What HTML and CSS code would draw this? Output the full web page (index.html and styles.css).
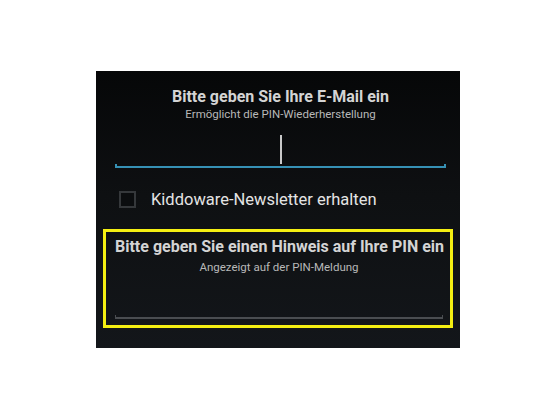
FILE: index.html
```html
<!DOCTYPE html>
<html lang="de">
<head>
<meta charset="utf-8">
<title>PIN-Einstellungen</title>
<link rel="stylesheet" href="styles.css">
</head>
<body>
<div class="panel">
  <div class="field">
    <div class="title">Bitte geben Sie Ihre E-Mail ein</div>
    <div class="subtitle">Ermöglicht die PIN-Wiederherstellung</div>
    <div class="input">
      <div class="caret"></div>
      <div class="line line-active"></div>
    </div>
  </div>
  <label class="check-row">
    <span class="checkbox"></span>
    <span class="check-label">Kiddoware-Newsletter erhalten</span>
  </label>
  <div class="field hint">
    <div class="title">Bitte geben Sie einen Hinweis auf Ihre PIN ein</div>
    <div class="subtitle sub-hint">Angezeigt auf der PIN-Meldung</div>
    <div class="line line-idle"></div>
  </div>
</div>
</body>
</html>
```

FILE: styles.css
```css
html, body {
  margin: 0;
  padding: 0;
  background: #ffffff;
}

body {
  font-family: Roboto, "Noto Sans", "Liberation Sans", sans-serif;
}

.panel {
  box-sizing: border-box;
  margin: 71px 0 0 96px;
  width: 364px;
  height: 277px;
  padding: 16px 14px 0 19px;
  background: linear-gradient(#060708, #0e1012 45%, #13161a);
  display: flex;
  flex-direction: column;
}

.title {
  font-size: 16px;
  line-height: 19px;
  font-weight: 700;
  color: #d4d4d4;
  text-align: center;
  white-space: nowrap;
}

.subtitle {
  margin-top: 1px;
  font-size: 11.5px;
  line-height: 14px;
  color: #b8b8b8;
  text-align: center;
}

.sub-hint {
  margin-top: 4px;
}

.input {
  margin-top: 14px;
  display: flex;
  flex-direction: column;
}

.caret {
  width: 2px;
  height: 29px;
  margin: 0 auto;
  background: #c9c9c9;
}

.line {
  height: 2px;
  border: 2px solid;
  border-top: none;
}

.line-active {
  border-color: #3691b5;
}

.line-idle {
  margin-top: 41px;
  height: 2px;
  border-width: 0 1px 2px 1px;
  border-color: #4a4d51;
}

.check-row {
  margin-top: 22px;
  display: flex;
  align-items: center;
  gap: 15px;
  padding-left: 4px;
}

.checkbox {
  box-sizing: border-box;
  width: 17px;
  height: 17px;
  border: 2px solid #35383b;
  background: #0b0d0f;
}

.check-label {
  font-size: 16.5px;
  line-height: 19px;
  color: #e4e4e4;
}

.hint {
  margin: 20px -7px 0 -12px;
  padding: 5px 7px 6px 9px;
  border: 3px solid #f4ef12;
}
```
